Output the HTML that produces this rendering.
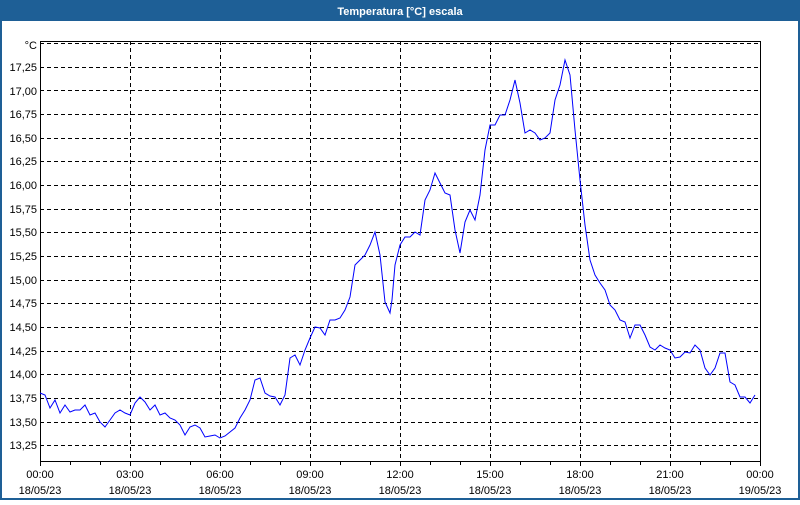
<!DOCTYPE html>
<html><head><style>
body{margin:0;width:800px;height:500px;overflow:hidden;background:#fff;font-family:"Liberation Sans",sans-serif}
</style></head><body>
<svg width="800" height="500" xmlns="http://www.w3.org/2000/svg" font-family="Liberation Sans, sans-serif" font-size="11">
<rect x="0" y="0" width="800" height="500" fill="#1e5f96"/>
<rect x="2" y="21" width="796" height="477" fill="#fff"/>
<text x="400" y="15" fill="#fff" font-weight="bold" text-anchor="middle">Temperatura [°C] escala</text>
<g stroke="#000" stroke-dasharray="4,3" stroke-width="1">
<line x1="40" x2="760" y1="43.5" y2="43.5"/>
<line x1="40" x2="760" y1="67.5" y2="67.5"/>
<line x1="40" x2="760" y1="90.5" y2="90.5"/>
<line x1="40" x2="760" y1="114.5" y2="114.5"/>
<line x1="40" x2="760" y1="138.5" y2="138.5"/>
<line x1="40" x2="760" y1="161.5" y2="161.5"/>
<line x1="40" x2="760" y1="185.5" y2="185.5"/>
<line x1="40" x2="760" y1="209.5" y2="209.5"/>
<line x1="40" x2="760" y1="232.5" y2="232.5"/>
<line x1="40" x2="760" y1="256.5" y2="256.5"/>
<line x1="40" x2="760" y1="280.5" y2="280.5"/>
<line x1="40" x2="760" y1="303.5" y2="303.5"/>
<line x1="40" x2="760" y1="327.5" y2="327.5"/>
<line x1="40" x2="760" y1="351.5" y2="351.5"/>
<line x1="40" x2="760" y1="374.5" y2="374.5"/>
<line x1="40" x2="760" y1="398.5" y2="398.5"/>
<line x1="40" x2="760" y1="422.5" y2="422.5"/>
<line x1="40" x2="760" y1="445.5" y2="445.5"/>
<line x1="130.5" x2="130.5" y1="41" y2="461"/>
<line x1="220.5" x2="220.5" y1="41" y2="461"/>
<line x1="310.5" x2="310.5" y1="41" y2="461"/>
<line x1="400.5" x2="400.5" y1="41" y2="461"/>
<line x1="490.5" x2="490.5" y1="41" y2="461"/>
<line x1="580.5" x2="580.5" y1="41" y2="461"/>
<line x1="670.5" x2="670.5" y1="41" y2="461"/>
</g>
<rect x="40.5" y="41.5" width="720" height="420" fill="none" stroke="#000"/>
<g stroke="#000">
<path d="M40.5 461v5M70.5 461v4M100.5 461v4M130.5 461v5M160.5 461v4M190.5 461v4M220.5 461v5M250.5 461v4M280.5 461v4M310.5 461v5M340.5 461v4M370.5 461v4M400.5 461v5M430.5 461v4M460.5 461v4M490.5 461v5M520.5 461v4M550.5 461v4M580.5 461v5M610.5 461v4M640.5 461v4M670.5 461v5M700.5 461v4M730.5 461v4M760.5 461v5"/>
</g>
<g text-anchor="end">
<text x="37" y="49">°C</text>
<text x="37" y="71">17,25</text><text x="37" y="95">17,00</text><text x="37" y="118">16,75</text><text x="37" y="142">16,50</text><text x="37" y="165">16,25</text><text x="37" y="189">16,00</text><text x="37" y="213">15,75</text><text x="37" y="236">15,50</text><text x="37" y="260">15,25</text><text x="37" y="284">15,00</text><text x="37" y="307">14,75</text><text x="37" y="331">14,50</text><text x="37" y="355">14,25</text><text x="37" y="378">14,00</text><text x="37" y="402">13,75</text><text x="37" y="426">13,50</text><text x="37" y="449">13,25</text>
</g>
<g text-anchor="middle">
<text x="40" y="478">00:00</text><text x="40" y="494">18/05/23</text>
<text x="130" y="478">03:00</text><text x="130" y="494">18/05/23</text>
<text x="220" y="478">06:00</text><text x="220" y="494">18/05/23</text>
<text x="310" y="478">09:00</text><text x="310" y="494">18/05/23</text>
<text x="400" y="478">12:00</text><text x="400" y="494">18/05/23</text>
<text x="490" y="478">15:00</text><text x="490" y="494">18/05/23</text>
<text x="580" y="478">18:00</text><text x="580" y="494">18/05/23</text>
<text x="670" y="478">21:00</text><text x="670" y="494">18/05/23</text>
<text x="760" y="478">00:00</text><text x="760" y="494">19/05/23</text>
</g>
<polyline fill="none" stroke="#0000ff" stroke-width="1" points="40,393 45,395 50,408 55,400 60,413 65,405 70,412 75,410 80,410 85,405 90,415 95,413 100,422 105,427 110,420 115,413 120,410 125,413 130,415 135,403 140,397 145,402 150,410 155,405 160,415 165,413 170,418 175,420 180,425 185,435 190,427 195,425 200,428 205,437 210,436 215,435 220,438 225,436 230,432 235,428 240,418 245,410 250,400 255,380 260,378 265,393 270,396 275,397 280,405 285,395 290,358 295,355 300,365 305,350 310,338 315,327 320,328 325,335 330,320 335,320 340,318 345,310 350,297 355,265 360,260 365,255 370,245 375,232 380,255 385,302 390,313 392,300 395,265 400,245 405,237 410,237 415,232 420,235 425,200 430,190 435,173 440,183 445,193 450,195 455,230 460,253 465,222 470,210 475,220 480,195 485,150 490,125 495,125 500,115 505,115 510,100 515,80 520,103 525,133 530,130 535,133 540,140 545,138 550,133 555,100 560,85 565,60 570,75 575,130 580,180 585,225 590,260 595,275 600,283 605,290 610,305 615,310 620,320 625,322 630,338 635,325 640,325 645,335 650,347 655,350 660,345 665,348 670,350 675,358 680,357 685,352 690,353 695,345 700,350 705,368 710,375 715,368 720,353 725,353 730,382 735,385 740,397 745,397 750,403 755,395"/>
</svg>
</body></html>
